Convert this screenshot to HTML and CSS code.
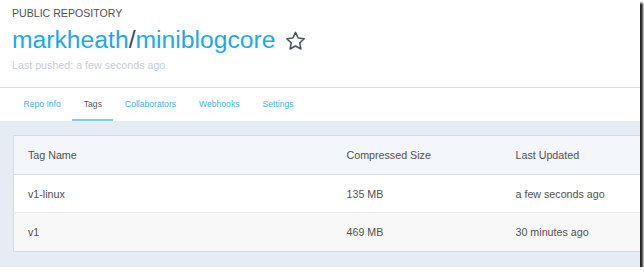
FILE: index.html
```html
<!DOCTYPE html>
<html>
<head>
<meta charset="utf-8">
<link rel="stylesheet" href="styles.css">
</head>
<body>
<div class="frame">
  <header class="repo-header">
    <div class="label">PUBLIC REPOSITORY</div>
    <h1 class="title"><span class="owner">markheath</span><span class="slash">/</span><span class="name">miniblogcore</span>
      <svg class="star" width="23" height="22" viewBox="0 0 24 24"><path d="M12 2.6l2.9 6.1 6.6.8-4.9 4.6 1.3 6.6L12 17.4l-5.9 3.3 1.3-6.6-4.9-4.6 6.6-.8z" fill="none" stroke="#4b5563" stroke-width="1.7" stroke-linejoin="round"/></svg>
    </h1>
    <div class="pushed">Last pushed: a few seconds ago</div>
  </header>
  <nav class="tabs">
    <a class="tab">Repo Info</a>
    <a class="tab active">Tags</a>
    <a class="tab">Collaborators</a>
    <a class="tab">Webhooks</a>
    <a class="tab">Settings</a>
  </nav>
  <main class="content">
    <table class="tags">
      <thead>
        <tr><th class="c1">Tag Name</th><th class="c2">Compressed Size</th><th class="c3">Last Updated</th></tr>
      </thead>
      <tbody>
        <tr><td>v1-linux</td><td>135 MB</td><td>a few seconds ago</td></tr>
        <tr class="alt"><td>v1</td><td>469 MB</td><td>30 minutes ago</td></tr>
      </tbody>
    </table>
  </main>
</div>
</body>
</html>
```
FILE: styles.css
```css
* { box-sizing: border-box; }
html, body { margin: 0; padding: 0; background: #ffffff; }
body { font-family: "Liberation Sans", Arial, sans-serif; }
.frame {
  width: 640px;
  height: 267px;
  overflow: hidden;
  background: #e6ecf4;
  box-shadow: 3px 3px 2px rgba(0,0,0,0.85);
  display: flex;
  flex-direction: column;
}
.repo-header {
  background: #fff;
  padding: 7px 12px 15px;
  border-bottom: 1px solid #dcdcdc;
}
.label {
  font-size: 10.6px;
  line-height: 13px;
  color: #505050;
}
.title {
  margin: 6px 0 0;
  font-weight: normal;
  font-size: 24.7px;
  line-height: 28px;
  display: flex;
  align-items: center;
}
.owner, .name { color: #1fa8e6; }
.slash { color: #3d4654; }
.star { margin-left: 9px; margin-top: 1px; }
.pushed {
  margin-top: 4px;
  font-size: 10.7px;
  line-height: 14px;
  color: #c6ced9;
}
.tabs {
  background: #fff;
  display: flex;
  padding-left: 12px;
}
.tab {
  font-size: 8.6px;
  line-height: 13px;
  padding: 10px 11.5px 8px;
  color: #3cb2ea;
  border-bottom: 2px solid transparent;
}
.tab.active {
  color: #555;
  border-bottom-color: #7dcdef;
}
.content {
  flex: 1;
  padding: 14px 0 0 13px;
}
.tags {
  width: 660px;
  border-collapse: collapse;
  background: #fff;
  border: 1px solid #d4dbe5;
  font-size: 10.7px;
  color: #505050;
}
.tags th {
  font-weight: normal;
  text-align: left;
  background: #f3f6fa;
  height: 39px;
  border-bottom: 1px solid #d4dbe5;
}
.tags td {
  text-align: left;
  height: 38px;
  border-bottom: 1px solid #e8ebef;
}
.tags tr.alt td { height: 39px; background: #f8f8f8; border-bottom-color: #d4dbe5; }
.tags th, .tags td { padding: 0 0 0 14px; }
.c1 { width: 319px; }
.c2 { width: 169px; }
```
